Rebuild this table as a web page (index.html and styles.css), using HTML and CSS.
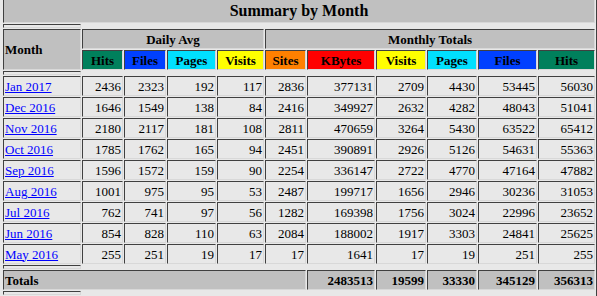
FILE: index.html
```html
<!DOCTYPE html>
<html>
<head>
<meta charset="utf-8">
<title>Summary by Month</title>
<link rel="stylesheet" href="styles.css">
</head>
<body>
<table class="summary">
  <colgroup>
    <col class="c-month"><col class="c-dhits"><col class="c-dfiles"><col class="c-dpages"><col class="c-dvisits">
    <col class="c-sites"><col class="c-kbytes"><col class="c-mvisits"><col class="c-mpages"><col class="c-mfiles"><col class="c-mhits">
  </colgroup>
  <tr class="r-title"><th colspan="11" class="title">Summary by Month</th></tr>
  <tr class="r-spacer"><th class="spacer"></th></tr>
  <tr class="r-head">
    <th rowspan="2" class="grey left">Month</th>
    <th colspan="4" class="grey">Daily Avg</th>
    <th colspan="6" class="grey">Monthly Totals</th>
  </tr>
  <tr class="r-head">
    <th class="hits">Hits</th>
    <th class="files">Files</th>
    <th class="pages">Pages</th>
    <th class="visits">Visits</th>
    <th class="sites">Sites</th>
    <th class="kbytes">KBytes</th>
    <th class="visits">Visits</th>
    <th class="pages">Pages</th>
    <th class="files">Files</th>
    <th class="hits">Hits</th>
  </tr>
  <tr class="r-spacer"><th class="spacer"></th></tr>
  <tr class="r-data"><td class="month"><a href="#">Jan 2017</a></td><td>2436</td><td>2323</td><td>192</td><td>117</td><td>2836</td><td>377131</td><td>2709</td><td>4430</td><td>53445</td><td>56030</td></tr>
  <tr class="r-data"><td class="month"><a href="#">Dec 2016</a></td><td>1646</td><td>1549</td><td>138</td><td>84</td><td>2416</td><td>349927</td><td>2632</td><td>4282</td><td>48043</td><td>51041</td></tr>
  <tr class="r-data"><td class="month"><a href="#">Nov 2016</a></td><td>2180</td><td>2117</td><td>181</td><td>108</td><td>2811</td><td>470659</td><td>3264</td><td>5430</td><td>63522</td><td>65412</td></tr>
  <tr class="r-data"><td class="month"><a href="#">Oct 2016</a></td><td>1785</td><td>1762</td><td>165</td><td>94</td><td>2451</td><td>390891</td><td>2926</td><td>5126</td><td>54631</td><td>55363</td></tr>
  <tr class="r-data"><td class="month"><a href="#">Sep 2016</a></td><td>1596</td><td>1572</td><td>159</td><td>90</td><td>2254</td><td>336147</td><td>2722</td><td>4770</td><td>47164</td><td>47882</td></tr>
  <tr class="r-data"><td class="month"><a href="#">Aug 2016</a></td><td>1001</td><td>975</td><td>95</td><td>53</td><td>2487</td><td>199717</td><td>1656</td><td>2946</td><td>30236</td><td>31053</td></tr>
  <tr class="r-data"><td class="month"><a href="#">Jul 2016</a></td><td>762</td><td>741</td><td>97</td><td>56</td><td>1282</td><td>169398</td><td>1756</td><td>3024</td><td>22996</td><td>23652</td></tr>
  <tr class="r-data"><td class="month"><a href="#">Jun 2016</a></td><td>854</td><td>828</td><td>110</td><td>63</td><td>2084</td><td>188002</td><td>1917</td><td>3303</td><td>24841</td><td>25625</td></tr>
  <tr class="r-data"><td class="month"><a href="#">May 2016</a></td><td>255</td><td>251</td><td>19</td><td>17</td><td>17</td><td>1641</td><td>17</td><td>19</td><td>251</td><td>255</td></tr>
  <tr class="r-spacer"><th class="spacer"></th></tr>
  <tr class="r-data">
    <th colspan="6" class="grey left">Totals</th>
    <th class="grey num">2483513</th>
    <th class="grey num">19599</th>
    <th class="grey num">33330</th>
    <th class="grey num">345129</th>
    <th class="grey num">356313</th>
  </tr>
  <tr class="r-spacer"><th class="spacer"></th></tr>
</table>
</body>
</html>
```

FILE: styles.css
```css
html, body {
  margin: 0;
  padding: 0;
  overflow: hidden;
  background: #e8e8e8;
}

body {
  font-family: "Liberation Serif", "Times New Roman", serif;
  color: #000;
}

.summary {
  table-layout: fixed;
  width: 598px;
  margin-top: -4px;
  border-collapse: separate;
  border-spacing: 1px;
  border-style: solid;
  border-width: 2px;
  border-color: #e8e8e8 #404040 #404040 #e8e8e8;
  background: #e8e8e8;
}

.c-month { width: 78px; }
.c-dhits { width: 41px; }
.c-dfiles { width: 42px; }
.c-dpages { width: 49px; }
.c-dvisits { width: 47px; }
.c-sites { width: 41px; }
.c-kbytes { width: 68px; }
.c-mvisits { width: 50px; }
.c-mpages { width: 50px; }
.c-mfiles { width: 59px; }
.c-mhits { width: 57px; }

.summary th,
.summary td {
  padding: 1px;
  border-style: solid;
  border-width: 1px;
  border-color: #404040 #d8d8d8 #d8d8d8 #404040;
  font-size: 13px;
  line-height: 15px;
  white-space: nowrap;
  overflow: hidden;
  vertical-align: middle;
}

.summary th {
  font-weight: bold;
  text-align: center;
}

.summary td {
  text-align: right;
}

.r-title { height: 24px; }
.r-spacer { height: 4px; }
.r-head { height: 20px; }
.r-data { height: 20px; }

.summary .title {
  background: #c0c0c0;
  font-size: 16px;
  line-height: 18px;
}

.summary .spacer {
  padding: 0;
  height: 2px;
}

.summary .grey { background: #c0c0c0; }
.summary .left { text-align: left; }
.summary .num { text-align: right; }

.summary .hits { background: #00805c; }
.summary .files { background: #0040ff; }
.summary .pages { background: #00e0ff; }
.summary .visits { background: #ffff00; }
.summary .sites { background: #ff8000; }
.summary .kbytes { background: #ff0000; }

.summary td.month { text-align: left; }

.month a {
  color: #0000ff;
  text-decoration: underline;
}
```
